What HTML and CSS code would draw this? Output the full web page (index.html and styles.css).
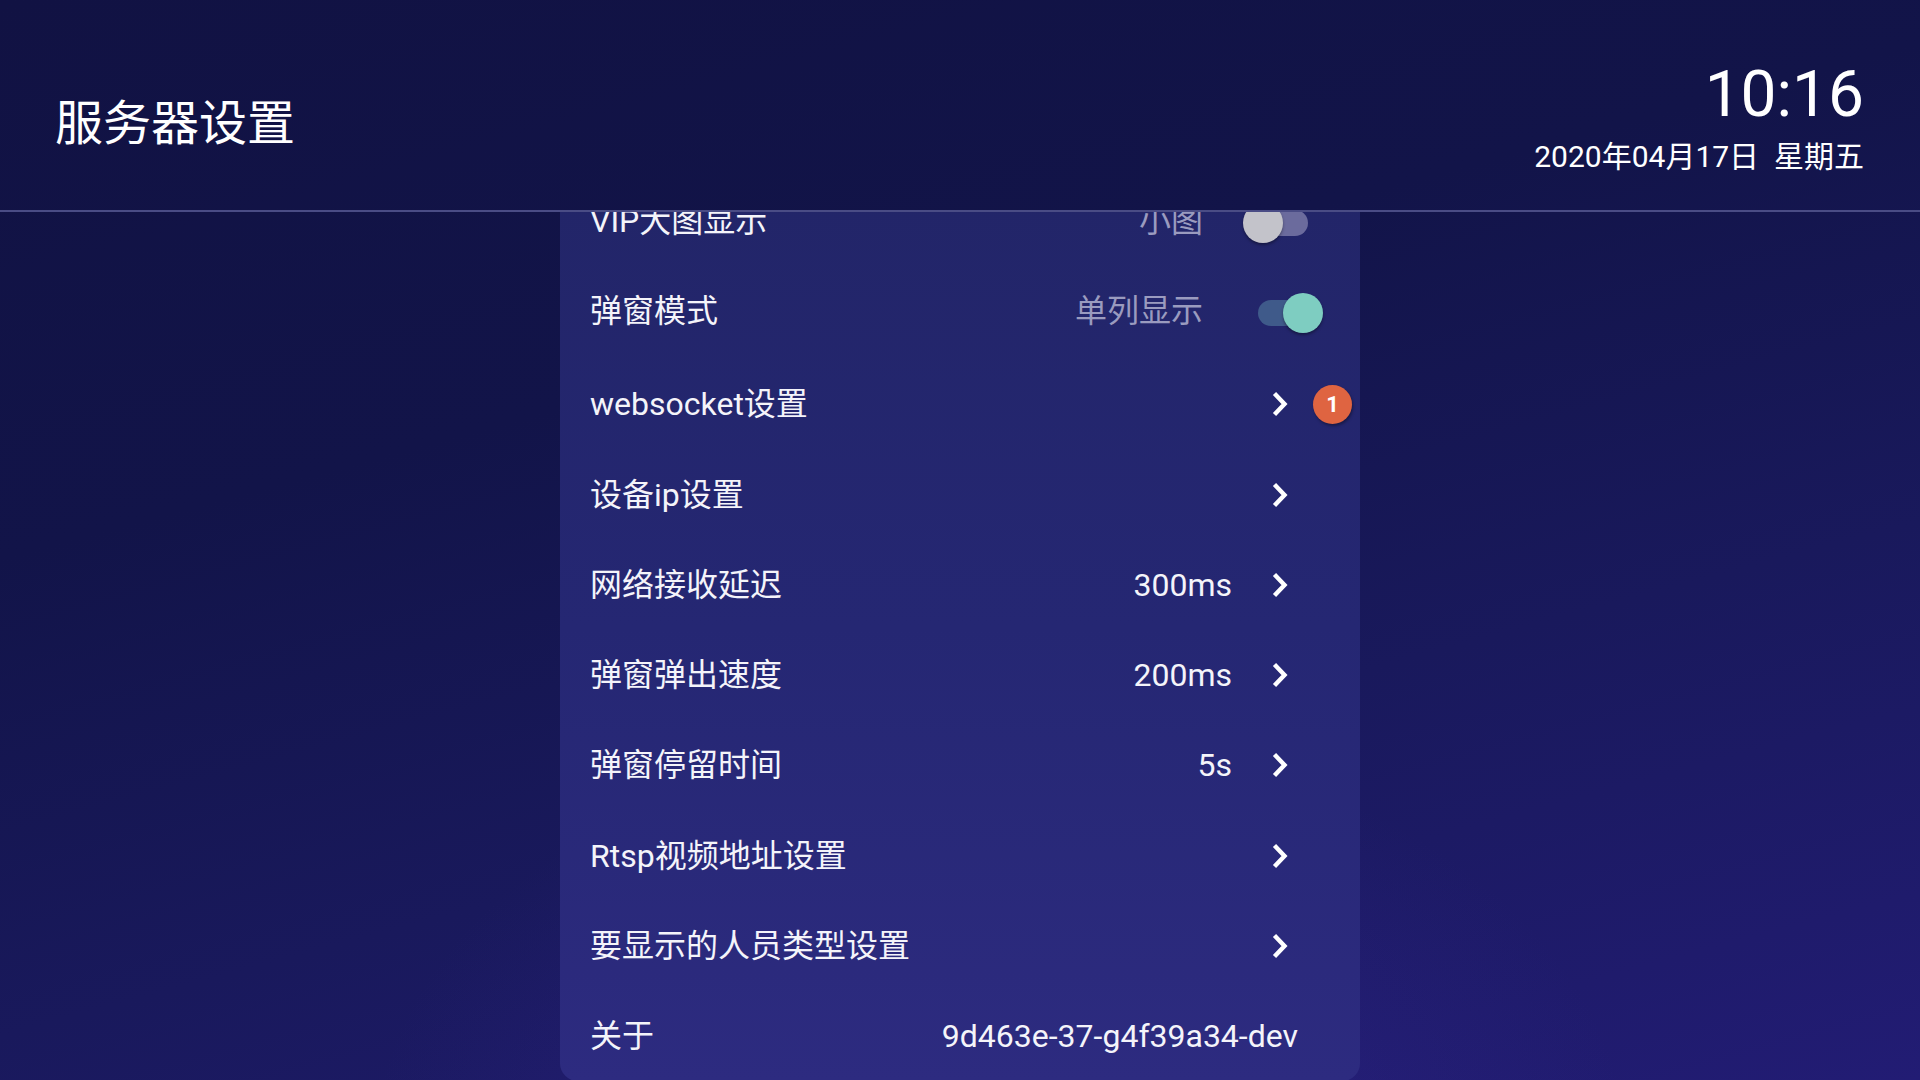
FILE: index.html
```html
<!DOCTYPE html>
<html lang="zh-CN">
<head>
<meta charset="utf-8">
<title>服务器设置</title>
<link rel="stylesheet" href="styles.css">
</head>
<body>
<div class="screen">
  <header class="topbar">
    <h1 class="title">服务器设置</h1>
    <div class="clock">
      <div class="time">10:16</div>
      <div class="date">2020年04月17日&nbsp; 星期五</div>
    </div>
  </header>
  <main class="content">
    <section class="panel">
      <div class="row row-switch">
        <span class="label">VIP大图显示</span>
        <span class="value muted">小图</span>
        <span class="switch"><span class="track"></span><span class="thumb"></span></span>
      </div>
      <div class="row row-switch row-gap">
        <span class="label">弹窗模式</span>
        <span class="value muted">单列显示</span>
        <span class="switch on"><span class="track"></span><span class="thumb"></span></span>
      </div>
      <div class="row row-link">
        <span class="label">websocket设置</span>
        <svg class="chev" viewBox="0 0 16 26" width="16" height="26"><path d="M2.5 2.5 L12.5 13 L2.5 23.5"/></svg>
        <span class="badge">1</span>
      </div>
      <div class="row row-link">
        <span class="label">设备ip设置</span>
        <svg class="chev" viewBox="0 0 16 26" width="16" height="26"><path d="M2.5 2.5 L12.5 13 L2.5 23.5"/></svg>
      </div>
      <div class="row row-link">
        <span class="label">网络接收延迟</span>
        <span class="value">300ms</span>
        <svg class="chev" viewBox="0 0 16 26" width="16" height="26"><path d="M2.5 2.5 L12.5 13 L2.5 23.5"/></svg>
      </div>
      <div class="row row-link">
        <span class="label">弹窗弹出速度</span>
        <span class="value">200ms</span>
        <svg class="chev" viewBox="0 0 16 26" width="16" height="26"><path d="M2.5 2.5 L12.5 13 L2.5 23.5"/></svg>
      </div>
      <div class="row row-link">
        <span class="label">弹窗停留时间</span>
        <span class="value">5s</span>
        <svg class="chev" viewBox="0 0 16 26" width="16" height="26"><path d="M2.5 2.5 L12.5 13 L2.5 23.5"/></svg>
      </div>
      <div class="row row-link">
        <span class="label">Rtsp视频地址设置</span>
        <svg class="chev" viewBox="0 0 16 26" width="16" height="26"><path d="M2.5 2.5 L12.5 13 L2.5 23.5"/></svg>
      </div>
      <div class="row row-link">
        <span class="label">要显示的人员类型设置</span>
        <svg class="chev" viewBox="0 0 16 26" width="16" height="26"><path d="M2.5 2.5 L12.5 13 L2.5 23.5"/></svg>
      </div>
      <div class="row row-about">
        <span class="label">关于</span>
        <span class="value">9d463e-37-g4f39a34-dev</span>
      </div>
    </section>
  </main>
</div>
</body>
</html>
```
FILE: styles.css
```css
html, body {
  margin: 0;
  padding: 0;
}

body {
  font-family: Roboto, "Noto Sans CJK SC", sans-serif;
  color: #ffffff;
}

.screen {
  width: 1920px;
  height: 1080px;
  display: flex;
  flex-direction: column;
  overflow: hidden;
  background:
    radial-gradient(ellipse 900px 600px at 1000px 1150px, rgba(60, 45, 160, 0.35), rgba(60, 45, 160, 0) 70%),
    linear-gradient(165deg, #111243 0%, #121449 35%, #19195c 65%, #221c74 100%);
}

.topbar {
  box-sizing: border-box;
  height: 212px;
  flex-shrink: 0;
  display: flex;
  justify-content: space-between;
  align-items: flex-start;
  padding: 0 56px 0 55px;
  border-bottom: 2px solid #4a4c85;
}

.title {
  margin: 100px 0 0;
  font-size: 48px;
  line-height: 48px;
  font-weight: 400;
}

.clock {
  margin-top: 63px;
  text-align: right;
}

.time {
  font-size: 64px;
  line-height: 64px;
}

.date {
  margin-top: 15px;
  font-size: 30px;
  line-height: 30px;
}

.content {
  flex: 1;
  overflow: hidden;
  display: flex;
  justify-content: center;
  align-items: flex-start;
}

.panel {
  width: 800px;
  margin-top: -36px;
  border-radius: 0 0 18px 18px;
  background: linear-gradient(180deg, #222568 0%, #252773 50%, #2d2b80 100%);
}

.row {
  position: relative;
  box-sizing: border-box;
  height: 90.3px;
  display: flex;
  align-items: center;
  padding-left: 30px;
  font-size: 32px;
  line-height: 40px;
}

.row-gap {
  margin-bottom: 2.5px;
}

.label {
  flex: 1;
  color: #f4f4fa;
}

.value {
  color: #f4f4fa;
  margin-right: 40px;
}

.value.muted {
  color: #9a9bbf;
}

.row-link {
  padding-right: 72px;
}

.row-switch {
  padding-right: 37px;
}

.row-about {
  padding-right: 22px;
}

.chev {
  display: block;
  fill: none;
  stroke: #ffffff;
  stroke-width: 4.4;
  stroke-linejoin: miter;
}

.badge {
  position: absolute;
  right: 8px;
  top: 26px;
  width: 39px;
  height: 39px;
  border-radius: 50%;
  background: #df6441;
  box-shadow: 1px 2px 3px rgba(0, 0, 0, 0.35);
  color: #ffffff;
  font-size: 22px;
  font-weight: 700;
  line-height: 39px;
  text-align: center;
}

.switch {
  position: relative;
  width: 80px;
  height: 40px;
  flex-shrink: 0;
  margin-top: 4px;
}

.switch .track {
  position: absolute;
  left: 15px;
  top: 7px;
  width: 50px;
  height: 26px;
  border-radius: 13px;
  background: #6b6b9d;
}

.switch .thumb {
  position: absolute;
  left: 0;
  top: 0;
  width: 40px;
  height: 40px;
  border-radius: 50%;
  background: #c3c3ca;
  box-shadow: 0 2px 3px rgba(0, 0, 0, 0.35);
}

.switch.on .track {
  background: #3f5a8a;
}

.switch.on .thumb {
  left: 40px;
  background: #7ecdc1;
}
```
